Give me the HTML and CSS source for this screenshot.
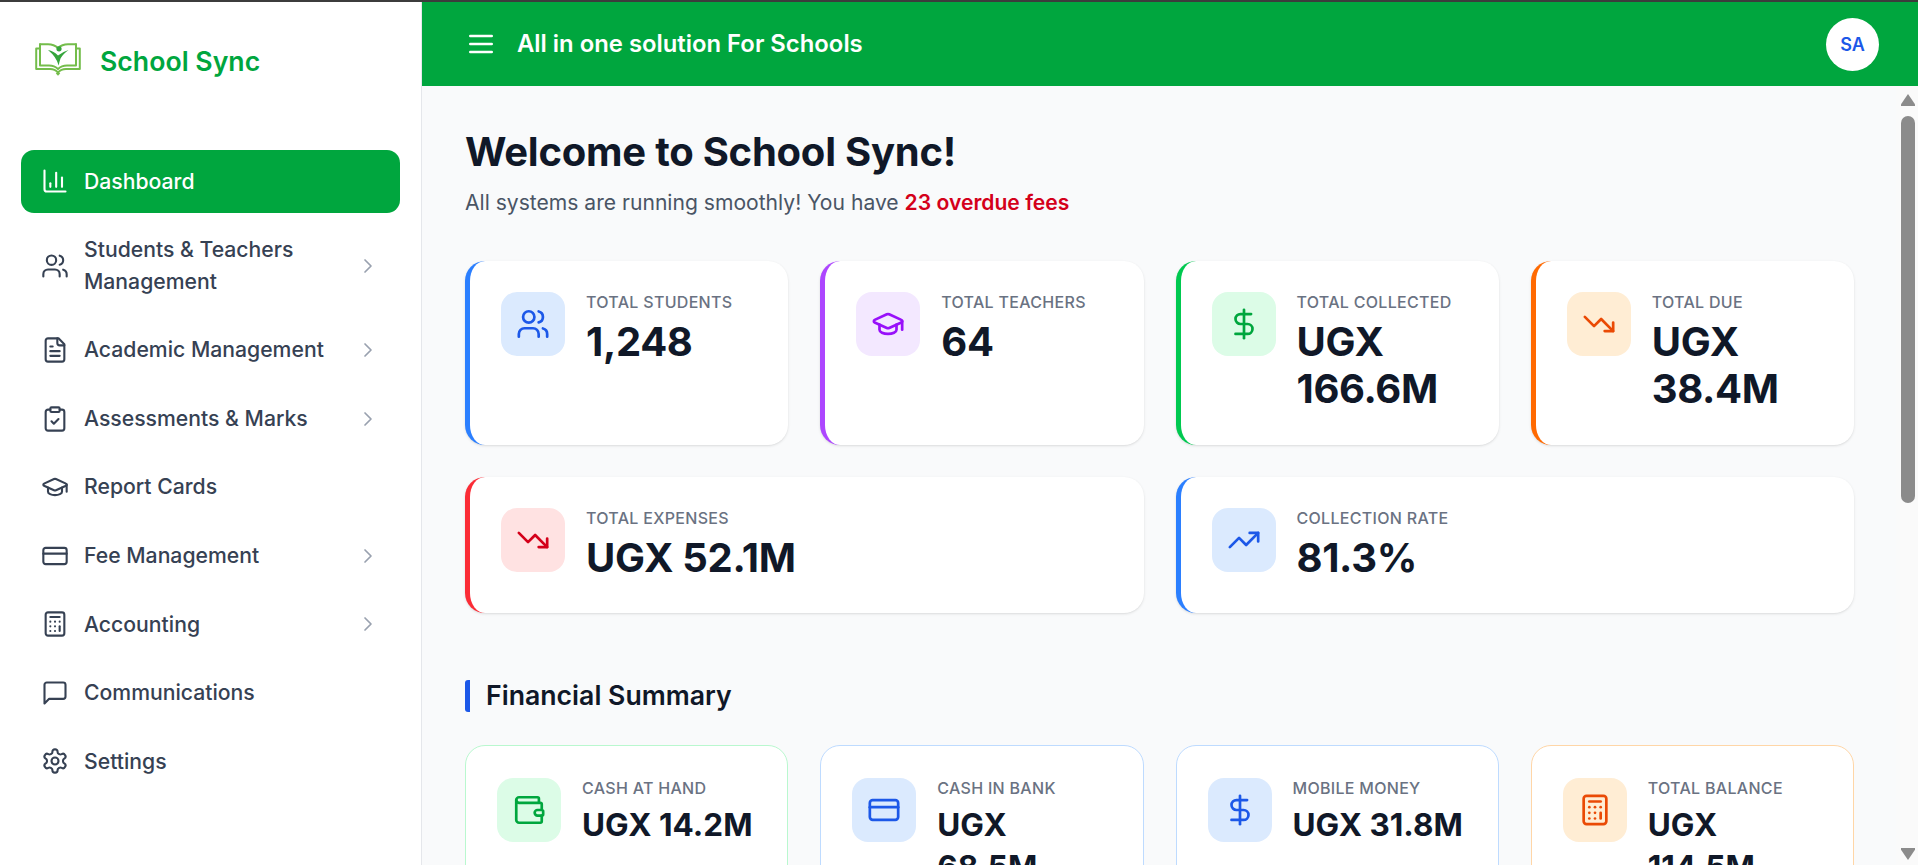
FILE: index.html
```html
<!DOCTYPE html>
<html lang="en">
<head>
<meta charset="utf-8">
<title>School Sync</title>
<link rel="stylesheet" href="styles.css">
</head>
<body>
<svg class="defs" width="0" height="0" aria-hidden="true">
  <defs>
    <symbol id="i-chart" viewBox="0 0 24 24"><path d="M3 3v16a2 2 0 0 0 2 2h16"/><path d="M18 17V9"/><path d="M13 17V5"/><path d="M8 17v-3"/></symbol>
    <symbol id="i-users" viewBox="0 0 24 24"><path d="M16 21v-2a4 4 0 0 0-4-4H6a4 4 0 0 0-4 4v2"/><circle cx="9" cy="7" r="4"/><path d="M22 21v-2a4 4 0 0 0-3-3.87"/><path d="M16 3.13a4 4 0 0 1 0 7.75"/></symbol>
    <symbol id="i-file" viewBox="0 0 24 24"><path d="M15 2H6a2 2 0 0 0-2 2v16a2 2 0 0 0 2 2h12a2 2 0 0 0 2-2V7Z"/><path d="M14 2v4a2 2 0 0 0 2 2h4"/><path d="M10 9H8"/><path d="M16 13H8"/><path d="M16 17H8"/></symbol>
    <symbol id="i-clip" viewBox="0 0 24 24"><rect x="8" y="2" width="8" height="4" rx="1" ry="1"/><path d="M16 4h2a2 2 0 0 1 2 2v14a2 2 0 0 1-2 2H6a2 2 0 0 1-2-2V6a2 2 0 0 1 2-2h2"/><path d="m9 14 2 2 4-4"/></symbol>
    <symbol id="i-cap" viewBox="0 0 24 24"><path d="M21.42 10.922a1 1 0 0 0-.019-1.838L12.83 5.18a2 2 0 0 0-1.66 0L2.6 9.08a1 1 0 0 0 0 1.832l8.57 3.908a2 2 0 0 0 1.66 0z"/><path d="M22 10v6"/><path d="M6 12.5V16a6 3 0 0 0 12 0v-3.5"/></symbol>
    <symbol id="i-card" viewBox="0 0 24 24"><rect x="2" y="5" width="20" height="14" rx="2"/><path d="M2 10h20"/></symbol>
    <symbol id="i-calc" viewBox="0 0 24 24"><rect x="4" y="2" width="16" height="20" rx="2"/><path d="M8 6h8"/><path d="M16 14v4"/><path d="M16 10h.01"/><path d="M12 10h.01"/><path d="M8 10h.01"/><path d="M12 14h.01"/><path d="M8 14h.01"/><path d="M12 18h.01"/><path d="M8 18h.01"/></symbol>
    <symbol id="i-msg" viewBox="0 0 24 24"><path d="M21 15a2 2 0 0 1-2 2H7l-4 4V5a2 2 0 0 1 2-2h14a2 2 0 0 1 2 2z"/></symbol>
    <symbol id="i-gear" viewBox="0 0 24 24"><path d="M12.22 2h-.44a2 2 0 0 0-2 2v.18a2 2 0 0 1-1 1.73l-.43.25a2 2 0 0 1-2 0l-.15-.08a2 2 0 0 0-2.73.73l-.22.38a2 2 0 0 0 .73 2.73l.15.1a2 2 0 0 1 1 1.72v.51a2 2 0 0 1-1 1.74l-.15.09a2 2 0 0 0-.73 2.73l.22.38a2 2 0 0 0 2.73.73l.15-.08a2 2 0 0 1 2 0l.43.25a2 2 0 0 1 1 1.73V20a2 2 0 0 0 2 2h.44a2 2 0 0 0 2-2v-.18a2 2 0 0 1 1-1.73l.43-.25a2 2 0 0 1 2 0l.15.08a2 2 0 0 0 2.73-.73l.22-.39a2 2 0 0 0-.73-2.73l-.15-.08a2 2 0 0 1-1-1.74v-.5a2 2 0 0 1 1-1.74l.15-.09a2 2 0 0 0 .73-2.73l-.22-.38a2 2 0 0 0-2.73-.73l-.15.08a2 2 0 0 1-2 0l-.43-.25a2 2 0 0 1-1-1.73V4a2 2 0 0 0-2-2z"/><circle cx="12" cy="12" r="3"/></symbol>
    <symbol id="i-chev" viewBox="0 0 24 24"><path d="m9 18 6-6-6-6"/></symbol>
    <symbol id="i-menu" viewBox="0 0 24 24"><path d="M4 6h16"/><path d="M4 12h16"/><path d="M4 18h16"/></symbol>
    <symbol id="i-dollar" viewBox="0 0 24 24"><path d="M12 2v20"/><path d="M17 5H9.5a3.5 3.5 0 0 0 0 7h5a3.5 3.5 0 0 1 0 7H6"/></symbol>
    <symbol id="i-down" viewBox="0 0 24 24"><path d="M22 17 13.5 8.5l-5 5L2 7"/><path d="M16 17h6v-6"/></symbol>
    <symbol id="i-up" viewBox="0 0 24 24"><path d="M22 7l-8.500 8.500-5-5L2 17"/><path d="M16 7h6v6"/></symbol>
    <symbol id="i-wallet" viewBox="0 0 24 24"><path d="M19 7V4a1 1 0 0 0-1-1H5a2 2 0 0 0 0 4h15a1 1 0 0 1 1 1v4h-3a2 2 0 0 0 0 4h3a1 1 0 0 0 1-1v-2a1 1 0 0 0-1-1"/><path d="M3 5v14a2 2 0 0 0 2 2h15a1 1 0 0 0 1-1v-4"/></symbol>
  </defs>
</svg>
<div class="topline"></div>
<div class="app">
  <aside class="sidebar">
    <div class="brand">
      <svg class="brand-logo" viewBox="0 0 46 34" fill="none">
        <g stroke="#74bd4b" stroke-width="2" stroke-linejoin="round" stroke-linecap="round">
          <path d="M5 5.500H1.200V26H15Q20 26 23 29.500Q26 26 31 26H44.800V5.500H41"/>
          <path d="M5 1.200V22.500H14Q19.500 22.500 23 26Q26.500 22.500 32 22.500H41V1.200"/>
          <path d="M5 1.200H13Q19 1.200 23 5Q27 1.200 33 1.200H41"/>
        </g>
        <path d="M23 32.800 20.800 30.600 23 28.400 25.200 30.600Z" fill="#74bd4b"/>
        <circle cx="24" cy="5.800" r="2.600" fill="#35a53c"/>
        <path d="M13 7Q19 8 23 12.500Q27 9 33.500 7Q27.500 11.500 25.500 15.500Q24.300 19 23.700 22.500Q21.500 14 13 7Z" fill="#35a53c"/>
      </svg>
      <span class="brand-name">School Sync</span>
    </div>
    <nav class="nav">
      <a class="nav-item active"><svg class="nav-icon"><use href="#i-chart"/></svg><span class="nav-label">Dashboard</span></a>
      <a class="nav-item"><svg class="nav-icon"><use href="#i-users"/></svg><span class="nav-label">Students &amp; Teachers Management</span><svg class="nav-chev"><use href="#i-chev"/></svg></a>
      <a class="nav-item"><svg class="nav-icon"><use href="#i-file"/></svg><span class="nav-label">Academic Management</span><svg class="nav-chev"><use href="#i-chev"/></svg></a>
      <a class="nav-item"><svg class="nav-icon"><use href="#i-clip"/></svg><span class="nav-label">Assessments &amp; Marks</span><svg class="nav-chev"><use href="#i-chev"/></svg></a>
      <a class="nav-item"><svg class="nav-icon"><use href="#i-cap"/></svg><span class="nav-label">Report Cards</span></a>
      <a class="nav-item"><svg class="nav-icon"><use href="#i-card"/></svg><span class="nav-label">Fee Management</span><svg class="nav-chev"><use href="#i-chev"/></svg></a>
      <a class="nav-item"><svg class="nav-icon"><use href="#i-calc"/></svg><span class="nav-label">Accounting</span><svg class="nav-chev"><use href="#i-chev"/></svg></a>
      <a class="nav-item"><svg class="nav-icon"><use href="#i-msg"/></svg><span class="nav-label">Communications</span></a>
      <a class="nav-item"><svg class="nav-icon"><use href="#i-gear"/></svg><span class="nav-label">Settings</span></a>
    </nav>
  </aside>
  <div class="main">
    <header class="header">
      <svg class="header-menu"><use href="#i-menu"/></svg>
      <span class="header-title">All in one solution For Schools</span>
      <span class="avatar">SA</span>
    </header>
    <div class="body-row">
      <main class="content">
        <h1 class="title">Welcome to School Sync!</h1>
        <p class="subtitle">All systems are running smoothly! You have <strong class="overdue">23 overdue fees</strong></p>
        <section class="stats">
          <article class="stat edge-blue"><span class="tile tile-blue"><svg><use href="#i-users"/></svg></span><div class="stat-text"><div class="stat-label">Total Students</div><div class="stat-value">1,248</div></div></article>
          <article class="stat edge-purple"><span class="tile tile-purple"><svg><use href="#i-cap"/></svg></span><div class="stat-text"><div class="stat-label">Total Teachers</div><div class="stat-value">64</div></div></article>
          <article class="stat edge-green"><span class="tile tile-green"><svg><use href="#i-dollar"/></svg></span><div class="stat-text"><div class="stat-label">Total Collected</div><div class="stat-value">UGX 166.6M</div></div></article>
          <article class="stat edge-orange"><span class="tile tile-orange"><svg><use href="#i-down"/></svg></span><div class="stat-text"><div class="stat-label">Total Due</div><div class="stat-value">UGX 38.4M</div></div></article>
          <article class="stat span-2 edge-red"><span class="tile tile-red"><svg><use href="#i-down"/></svg></span><div class="stat-text"><div class="stat-label">Total Expenses</div><div class="stat-value">UGX 52.1M</div></div></article>
          <article class="stat span-2 edge-blue"><span class="tile tile-blue"><svg><use href="#i-up"/></svg></span><div class="stat-text"><div class="stat-label">Collection Rate</div><div class="stat-value">81.3%</div></div></article>
        </section>
        <h2 class="section-title">Financial Summary</h2>
        <section class="fin-grid">
          <article class="fin line-green"><span class="tile tile-green"><svg><use href="#i-wallet"/></svg></span><div class="stat-text"><div class="stat-label">Cash at Hand</div><div class="fin-value">UGX 14.2M</div></div></article>
          <article class="fin line-blue"><span class="tile tile-blue"><svg><use href="#i-card"/></svg></span><div class="stat-text"><div class="stat-label">Cash in Bank</div><div class="fin-value">UGX 68.5M</div></div></article>
          <article class="fin line-blue"><span class="tile tile-blue"><svg><use href="#i-dollar"/></svg></span><div class="stat-text"><div class="stat-label">Mobile Money</div><div class="fin-value">UGX 31.8M</div></div></article>
          <article class="fin line-orange"><span class="tile tile-orange"><svg><use href="#i-calc"/></svg></span><div class="stat-text"><div class="stat-label">Total Balance</div><div class="fin-value">UGX 114.5M</div></div></article>
        </section>
      </main>
      <div class="scrollbar" aria-hidden="true">
        <span class="arrow arrow-up"></span>
        <span class="track"><span class="thumb"></span></span>
        <span class="arrow arrow-down"></span>
      </div>
    </div>
  </div>
</div>
</body>
</html>
```
FILE: styles.css
```css
* { box-sizing: border-box; }
html, body { height: 100%; }
body {
  margin: 0;
  display: flex;
  flex-direction: column;
  overflow: hidden;
  font-family: Inter, "Liberation Sans", sans-serif;
  color: #101828;
  background: #fff;
}
.defs { display: block; flex: none; }
svg { fill: none; stroke: currentColor; stroke-width: 2; stroke-linecap: round; stroke-linejoin: round; }
.topline { flex: none; height: 2px; background: #3c3c3c; }
.app { flex: 1; display: flex; min-height: 0; }

.sidebar {
  flex: none;
  width: 422px;
  background: #fff;
  border-right: 1px solid #e5e7eb;
}
.brand { display: flex; align-items: center; padding: 41px 0 0 35px; }
.brand-logo { flex: none; width: 46px; height: 34px; margin: 0 19px 2px 0; stroke: none; }
.brand-name { font-size: 26.67px; line-height: 36px; font-weight: 600; color: #00a63e; }
.nav { display: flex; flex-direction: column; gap: 5.9px; padding: 71px 21px 0; }
.nav-item {
  display: flex;
  align-items: center;
  padding: 15.6px 20px;
  border-radius: 13px;
  font-size: 21.2px;
  line-height: 31.5px;
  font-weight: 500;
  color: #364153;
}
.nav-item.active { background: #00a63e; color: #fff; }
.nav-icon { flex: none; width: 28px; height: 28px; margin-right: 15px; stroke-width: 1.8; }
.nav-label { flex: 1; min-width: 0; }
.nav-chev { flex: none; width: 24px; height: 24px; color: #99a1af; margin-left: 12px; stroke-width: 1.7; }

.main { flex: 1; min-width: 0; display: flex; flex-direction: column; background: #f9fafb; }
.header {
  flex: none;
  height: 84px;
  display: flex;
  align-items: center;
  padding: 0 39px 0 42.5px;
  background: #00a63e;
  color: #fff;
}
.header-menu { flex: none; width: 32px; height: 32px; margin-right: 20.5px; }
.header-title { flex: 1; font-size: 23.85px; line-height: 30px; font-weight: 600; }
.avatar {
  flex: none;
  width: 53px;
  height: 53px;
  border-radius: 50%;
  background: #fff;
  color: #1c58e8;
  display: flex;
  align-items: center;
  justify-content: center;
  font-size: 18px;
  font-weight: 600;
}
.body-row { flex: 1; min-height: 0; display: flex; }
.content { flex: 1; min-width: 0; overflow: hidden; padding: 42px 42px 0 43px; }
.title { margin: 0; font-size: 40px; line-height: 48px; font-weight: 700; letter-spacing: -.24px; color: #101828; }
.subtitle { margin: 11px 0 0; font-size: 21.1px; line-height: 32px; font-weight: 400; color: #4a5565; }
.overdue { font-weight: 600; color: #d4001a; }

.stats { display: grid; grid-template-columns: repeat(4, 1fr); gap: 32px; margin-top: 41.5px; }
.span-2 { grid-column: span 2; }
.stat {
  display: flex;
  align-items: flex-start;
  gap: 21px;
  padding: 31px 20px 32px 31px;
  background: #fff;
  border-left: 5px solid;
  border-radius: 20px;
  box-shadow: 0 1px 3px rgba(0, 0, 0, .1), 0 1px 2px -1px rgba(0, 0, 0, .1);
}
.edge-blue { border-left-color: #2b7fff; }
.edge-purple { border-left-color: #ad46ff; }
.edge-green { border-left-color: #00c950; }
.edge-orange { border-left-color: #ff6900; }
.edge-red { border-left-color: #fb2c36; }
.tile {
  flex: none;
  width: 64px;
  height: 64px;
  border-radius: 16px;
  display: flex;
  align-items: center;
  justify-content: center;
}
.tile svg { width: 34px; height: 34px; stroke-width: 1.9; }
.tile-blue { background: #dbeafe; color: #1c58e8; }
.tile-purple { background: #f3e8ff; color: #9810fa; }
.tile-green { background: #dcfce7; color: #00a63e; }
.tile-orange { background: #ffedd4; color: #ea4a05; }
.tile-red { background: #ffe2e2; color: #d4001a; }
.stat-text { min-width: 0; }
.stat-label {
  margin-top: -1.5px;
  margin-bottom: 3.5px;
  font-size: 16px;
  line-height: 24px;
  font-weight: 500;
  letter-spacing: .3px;
  text-transform: uppercase;
  color: #6a7282;
}
.stat-value { font-size: 40px; line-height: 47.5px; font-weight: 700; letter-spacing: -.35px; color: #101828; }
.section-title {
  margin: 66.5px 0 0;
  padding-left: 16px;
  height: 32px;
  border-left: 5px solid #1c58e8;
  border-radius: 3px 0 0 3px;
  font-size: 26.67px;
  line-height: 30.5px;
  font-weight: 600;
  color: #101828;
}
.fin-grid { display: grid; grid-template-columns: repeat(4, 1fr); gap: 32px; margin-top: 33px; }
.fin {
  display: flex;
  align-items: flex-start;
  gap: 21px;
  padding: 32px 32px 32px 31px;
  background: #fff;
  border: 1px solid;
  border-radius: 20px;
}
.fin .stat-label { margin-top: -2px; margin-bottom: 4px; }
.line-green { border-color: #b9f8cf; }
.line-blue { border-color: #bedbff; }
.line-orange { border-color: #ffd6a7; }
.fin-value { font-size: 31.5px; line-height: 42.7px; font-weight: 700; color: #101828; }

.scrollbar {
  flex: none;
  width: 22px;
  padding: 8px 3px 5px 5px;
  display: flex;
  flex-direction: column;
  background: #fafafa;
}
.arrow { flex: none; width: 14px; height: 12px; }
.arrow-up { background: #8b8b8b; clip-path: polygon(50% 0, 100% 85%, 100% 100%, 0 100%, 0 85%); }
.arrow-down { background: #8b8b8b; clip-path: polygon(0 0, 100% 0, 100% 15%, 50% 100%, 0 15%); }
.track { flex: 1; min-height: 0; padding: 10px 0; }
.thumb { display: block; height: 387px; background: #8b8b8b; border-radius: 7px; }
```
